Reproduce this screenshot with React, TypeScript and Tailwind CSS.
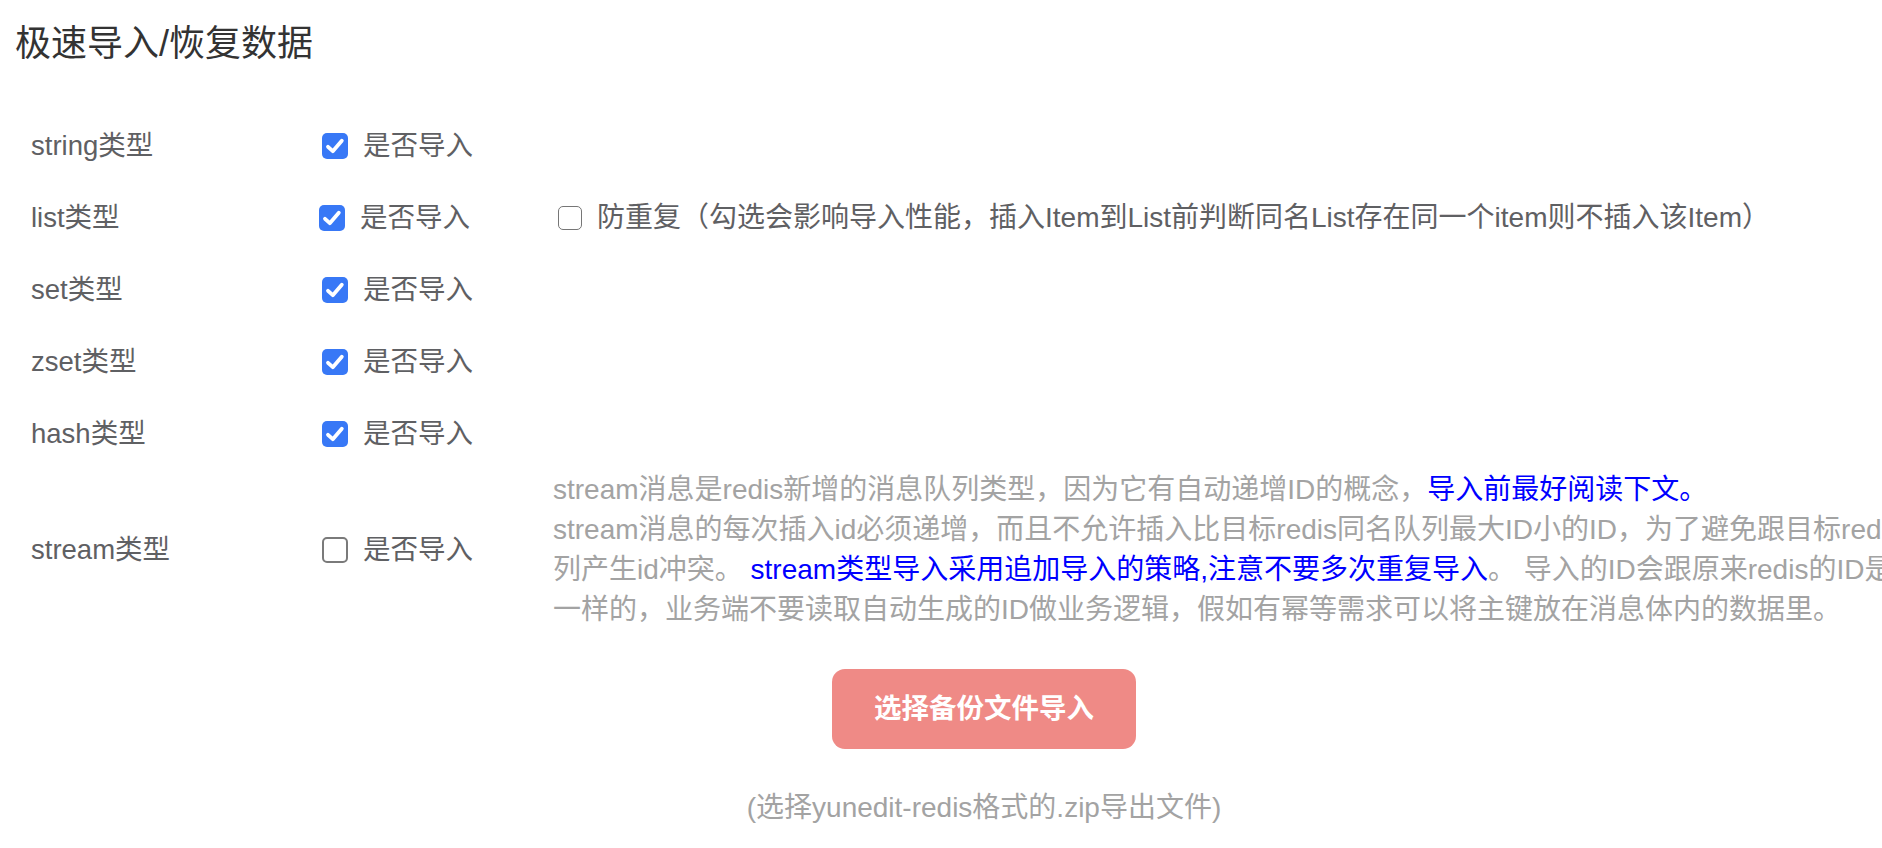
import React from "react";

const FONT = { fontFamily: '"Liberation Sans", "Noto Sans CJK SC", sans-serif' };

function Box({ checked, small }: { checked: boolean; small?: boolean }) {
  if (checked) {
    return (
      <span className="w-[26px] h-[26px] rounded-[5px] shrink-0 bg-[#3878f6] flex items-center justify-center">
        <svg viewBox="0 0 26 26" className="w-[26px] h-[26px]">
          <path d="M6 13.8 L10.8 18.2 L19.8 7.8" fill="none" stroke="#fff" strokeWidth="3.8" strokeLinecap="round" strokeLinejoin="round" />
        </svg>
      </span>
    );
  }
  if (small) {
    return <span className="w-[24px] h-[24px] rounded-[5px] shrink-0 bg-white border-[1.5px] border-[#767676]" />;
  }
  return <span className="w-[26px] h-[26px] rounded-[5px] shrink-0 bg-white border-[2px] border-[#7a7a7a]" />;
}

function Row({ label, checked, labelW = "w-[322px]", children }: { label: string; checked: boolean; labelW?: string; children?: React.ReactNode }) {
  return (
    <div className="flex h-[72px] items-center">
      <div className={`${labelW} shrink-0 pl-[31px] text-[#5f6063]`}>{label}</div>
      <div className="flex items-center w-[239px] shrink-0">
        <Box checked={checked} />
        <span className="ml-[15px] text-[#5f6063]">是否导入</span>
      </div>
      {children}
    </div>
  );
}

export default function App() {
  return (
    <div className="w-full h-[848px] overflow-hidden bg-white" style={FONT}>
      <h1 className="pl-[15px] pt-[18px] text-[36px] leading-[52px] font-normal text-[#333333]">极速导入/恢复数据</h1>
      <div className="mt-[40px] text-[27.5px] leading-[40px]">
        <Row label="string类型" checked />
        <Row label="list类型" checked labelW="w-[319px]">
          <div className="flex items-center whitespace-nowrap">
            <Box checked={false} small />
            <span className="ml-[15px] text-[28px] text-[#5f6063]">防重复（勾选会影响导入性能，插入Item到List前判断同名List存在同一个item则不插入该Item）</span>
          </div>
        </Row>
        <Row label="set类型" checked />
        <Row label="zset类型" checked />
        <Row label="hash类型" checked />
        <div className="flex items-center">
          <div className="w-[322px] shrink-0 pl-[31px] text-[#5f6063]">stream类型</div>
          <div className="flex items-center w-[231px] shrink-0">
            <Box checked={false} />
            <span className="ml-[15px] text-[#5f6063]">是否导入</span>
          </div>
          <div className="whitespace-nowrap text-[28px] text-[#a3a3a3] leading-[40px]">
            <div>
              stream消息是redis新增的消息队列类型，因为它有自动递增ID的概念，<span className="text-[#0000ff]">导入前最好阅读下文。</span>
            </div>
            <div>stream消息的每次插入id必须递增，而且不允许插入比目标redis同名队列最大ID小的ID，为了避免跟目标redis同名队</div>
            <div>
              列产生id冲突。 <span className="text-[#0000ff]">stream类型导入采用追加导入的策略,注意不要多次重复导入</span>。 导入的ID会跟原来redis的ID是
            </div>
            <div>一样的，业务端不要读取自动生成的ID做业务逻辑，假如有幂等需求可以将主键放在消息体内的数据里。</div>
          </div>
        </div>
        <div className="mt-[39px] w-[1968px] flex justify-center">
          <button className="w-[304px] h-[80px] rounded-[13px] bg-[#ef8a86] text-white font-bold text-[27.5px]">选择备份文件导入</button>
        </div>
        <div className="mt-[39px] w-[1968px] text-center text-[28px] text-[#a3a3a3]">(选择yunedit-redis格式的.zip导出文件)</div>
      </div>
    </div>
  );
}
